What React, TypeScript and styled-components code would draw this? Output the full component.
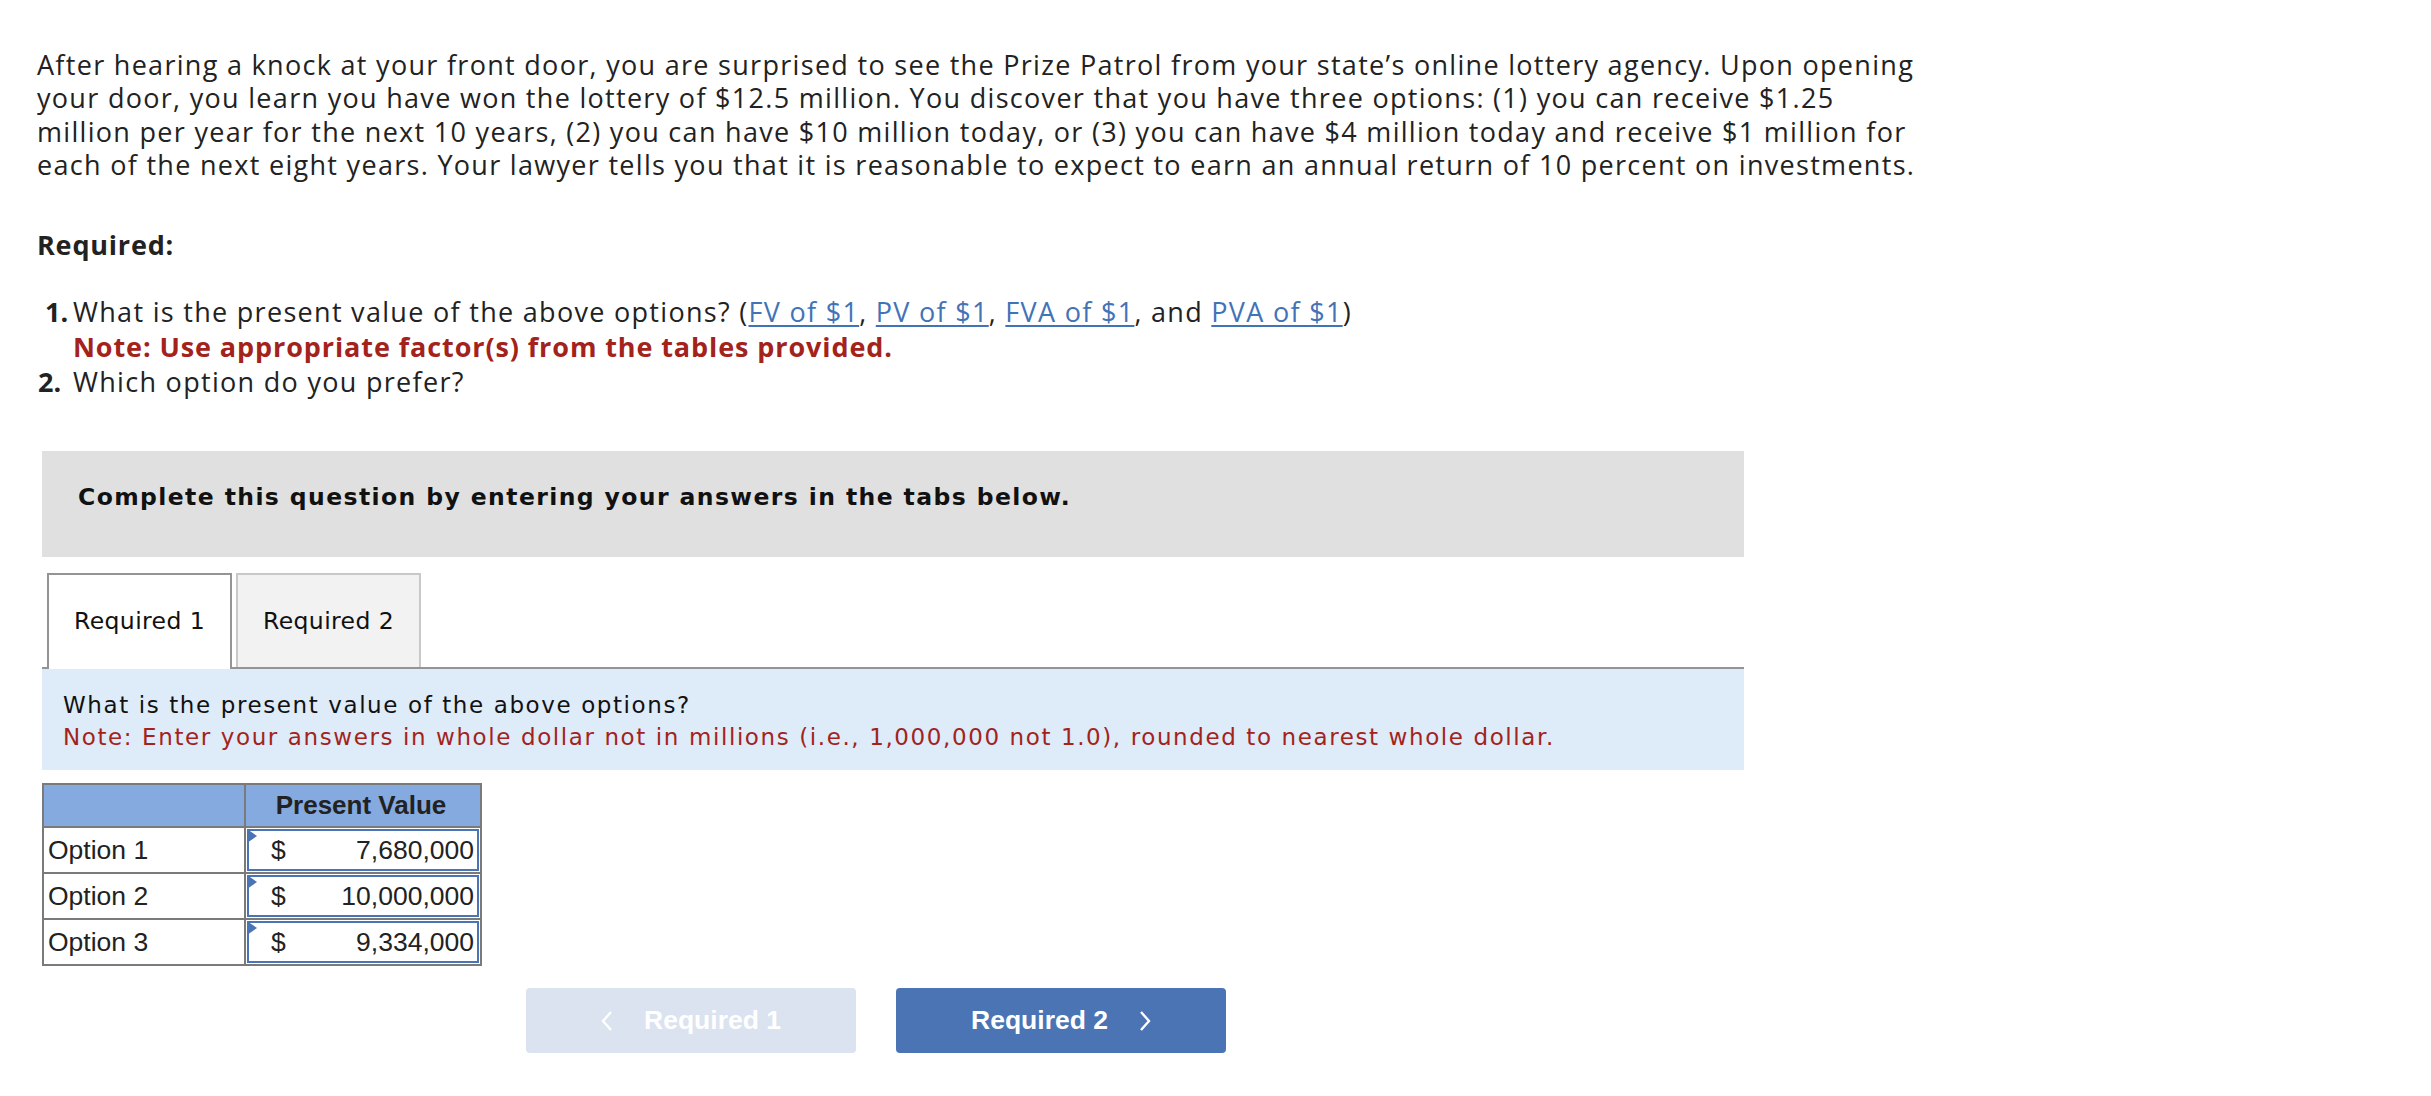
import React from "react";
import styled, { createGlobalStyle } from "styled-components";

const Global = createGlobalStyle`
  html, body { margin: 0; padding: 0; background: #fff; }
  body { font-family: "Open Sans", sans-serif; color: #222; }
`;

const Page = styled.div`
  padding: 48px 0 40px 37px;
  width: 1960px;
`;

const Para = styled.p`
  margin: 0;
  font-family: "Open Sans", sans-serif;
  font-size: 27px;
  letter-spacing: 1.3px;
  line-height: 33.3px;
  color: #222;
`;

const Heading = styled.div`
  margin-top: 47px;
  font-family: "Open Sans", sans-serif;
  font-weight: 700;
  font-size: 27px;
  letter-spacing: 0.8px;
  line-height: 33.3px;
  color: #222;
`;

const List = styled.div`
  margin-top: 33px;
  font-family: "Open Sans", sans-serif;
  font-size: 27px;
  letter-spacing: 1.3px;
  line-height: 35px;
  color: #222;
`;

const Item = styled.div`
  display: grid;
  grid-template-columns: 36px auto;
`;

const Num = styled.span<{ $indent?: boolean }>`
  font-weight: 700;
  letter-spacing: 0;
  padding-left: ${(p) => (p.$indent ? "8px" : "1px")};
`;

const Red = styled.div`
  color: #a3231c;
  font-weight: 700;
  letter-spacing: 0.9px;
`;

const Link = styled.a`
  color: #4173b8;
  text-decoration: underline;
  text-decoration-thickness: 2px;
  text-underline-offset: 3px;
`;

const Panel = styled.div`
  margin-top: 52px;
  margin-left: 5px;
  width: 1702px;
`;

const Banner = styled.div`
  height: 106px;
  box-sizing: border-box;
  padding: 32px 0 0 36px;
  background: #e0e0e0;
  font-family: "DejaVu Sans", Verdana, sans-serif;
  font-weight: 700;
  font-size: 23.5px;
  letter-spacing: 1.4px;
  color: #111;
`;

const Tabs = styled.div`
  margin-top: 16px;
  display: flex;
  gap: 4px;
  padding-left: 5px;
  border-bottom: 2px solid #949494;
`;

const Tab = styled.div<{ $active?: boolean }>`
  width: 185px;
  box-sizing: border-box;
  padding-top: 32px;
  text-align: center;
  font-family: "DejaVu Sans", Verdana, sans-serif;
  font-size: 23.5px;
  letter-spacing: 0.4px;
  color: #111;
  background: ${(p) => (p.$active ? "#fff" : "#f2f2f2")};
  border: 2px solid ${(p) => (p.$active ? "#949494" : "#c8c8c8")};
  border-bottom: none;
  margin-bottom: ${(p) => (p.$active ? "-2px" : "0")};
  height: ${(p) => (p.$active ? "96px" : "94px")};
`;

const Info = styled.div`
  background: #deebf8;
  padding: 20px 0 17px 21px;
  font-family: "DejaVu Sans", Verdana, sans-serif;
  font-size: 23px;
  letter-spacing: 1.6px;
  line-height: 32px;
  color: #111;
`;

const InfoNote = styled.div`
  color: #a3231c;
`;

const Table = styled.table`
  margin-top: 13px;
  border-collapse: collapse;
  font-family: "Liberation Sans", Arial, sans-serif;
  font-size: 26.5px;
  color: #222;
`;

const Th = styled.th`
  background: #84aadf;
  border: 2px solid #7a7a7a;
  height: 41px;
  padding: 0 4px 0 0;
  font-weight: 700;
  font-size: 26px;
  text-align: center;
`;

const LabelCell = styled.td`
  width: 196px;
  height: 42px;
  border: 2px solid #7a7a7a;
  padding: 0 0 0 4px;
`;

const ValueCell = styled.td`
  width: 232px;
  border: 2px solid #7a7a7a;
  padding: 1px;
`;

const InputBox = styled.div`
  position: relative;
  display: flex;
  justify-content: space-between;
  align-items: center;
  height: 42px;
  box-sizing: border-box;
  border: 2px solid #4b74b4;
  padding: 0 3px 0 22px;
  background: #fff;
`;

const Flag = styled.span`
  position: absolute;
  left: -2px;
  top: -2px;
  width: 0;
  height: 0;
  border-top: 7px solid transparent;
  border-bottom: 7px solid transparent;
  border-left: 10px solid #4b74b4;
`;

const Nav = styled.div`
  margin-top: 22px;
  padding-left: 484px;
  display: flex;
  gap: 40px;
`;

const NavButton = styled.button<{ $disabled?: boolean }>`
  width: 330px;
  height: 65px;
  border: none;
  border-radius: 4px;
  display: flex;
  align-items: center;
  justify-content: center;
  gap: 31px;
  font-family: "Liberation Sans", Arial, sans-serif;
  font-weight: 700;
  font-size: 26.5px;
  color: #fff;
  background: ${(p) => (p.$disabled ? "#dae3ef" : "#4a74b4")};
  cursor: ${(p) => (p.$disabled ? "default" : "pointer")};
`;

const Chevron = ({ dir }: { dir: "left" | "right" }) => (
  <svg width="12" height="22" viewBox="0 0 12 22" fill="none">
    <path
      d={dir === "left" ? "M10 2 L2 11 L10 20" : "M2 2 L10 11 L2 20"}
      stroke="#fff"
      strokeWidth="2.4"
    />
  </svg>
);

const rows = [
  { label: "Option 1", value: "7,680,000" },
  { label: "Option 2", value: "10,000,000" },
  { label: "Option 3", value: "9,334,000" },
];

export default function App() {
  return (
    <>
      <Global />
      <Page>
        <Para>
          After hearing a knock at your front door, you are surprised to see the Prize Patrol from your state’s online lottery agency. Upon opening
          <br />
          your door, you learn you have won the lottery of $12.5 million. You discover that you have three options: (1) you can receive $1.25
          <br />
          million per year for the next 10 years, (2) you can have $10 million today, or (3) you can have $4 million today and receive $1 million for
          <br />
          each of the next eight years. Your lawyer tells you that it is reasonable to expect to earn an annual return of 10 percent on investments.
        </Para>
        <Heading>Required:</Heading>
        <List>
          <Item>
            <Num $indent>1.</Num>
            <div>
              What is the present value of the above options? (<Link>FV of $1</Link>, <Link>PV of $1</Link>,{" "}
              <Link>FVA of $1</Link>, and <Link>PVA of $1</Link>)
              <Red>Note: Use appropriate factor(s) from the tables provided.</Red>
            </div>
          </Item>
          <Item>
            <Num>2.</Num>
            <div>Which option do you prefer?</div>
          </Item>
        </List>
        <Panel>
          <Banner>Complete this question by entering your answers in the tabs below.</Banner>
          <Tabs>
            <Tab $active>Required 1</Tab>
            <Tab>Required 2</Tab>
          </Tabs>
          <Info>
            What is the present value of the above options?
            <InfoNote>
              Note: Enter your answers in whole dollar not in millions (i.e., 1,000,000 not 1.0), rounded to nearest whole dollar.
            </InfoNote>
          </Info>
          <Table>
            <thead>
              <tr>
                <Th />
                <Th>Present Value</Th>
              </tr>
            </thead>
            <tbody>
              {rows.map((r) => (
                <tr key={r.label}>
                  <LabelCell>{r.label}</LabelCell>
                  <ValueCell>
                    <InputBox>
                      <Flag />
                      <span>$</span>
                      <span>{r.value}</span>
                    </InputBox>
                  </ValueCell>
                </tr>
              ))}
            </tbody>
          </Table>
          <Nav>
            <NavButton $disabled>
              <Chevron dir="left" />
              Required 1
            </NavButton>
            <NavButton>
              Required 2
              <Chevron dir="right" />
            </NavButton>
          </Nav>
        </Panel>
      </Page>
    </>
  );
}
